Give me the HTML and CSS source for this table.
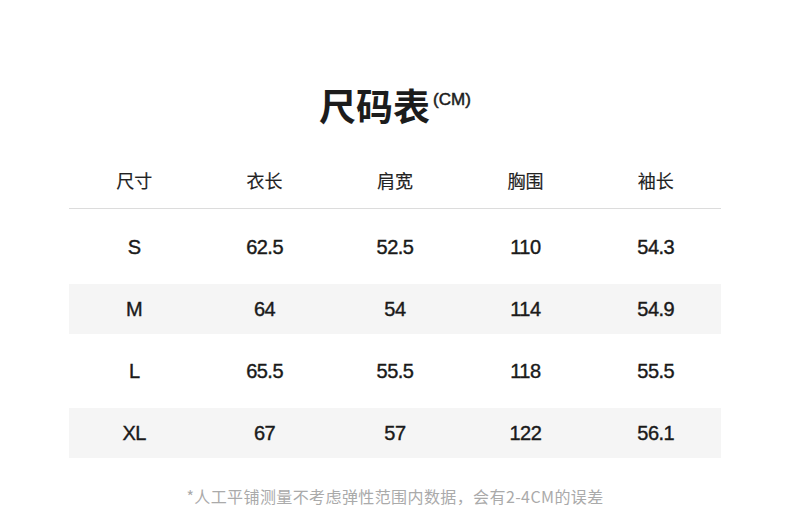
FILE: index.html
```html
<!DOCTYPE html>
<html lang="zh">
<head>
<meta charset="utf-8">
<title>尺码表</title>
<link rel="stylesheet" href="styles.css">
</head>
<body>
<main class="sheet">
  <h1 class="title">尺码表<span class="unit">(CM)</span></h1>
  <div class="table">
    <div class="row head">
      <div class="cell">尺寸</div><div class="cell">衣长</div><div class="cell">肩宽</div><div class="cell">胸围</div><div class="cell">袖长</div>
    </div>
    <div class="row">
      <div class="cell">S</div><div class="cell">62.5</div><div class="cell">52.5</div><div class="cell">110</div><div class="cell">54.3</div>
    </div>
    <div class="row alt">
      <div class="cell">M</div><div class="cell">64</div><div class="cell">54</div><div class="cell">114</div><div class="cell">54.9</div>
    </div>
    <div class="row">
      <div class="cell">L</div><div class="cell">65.5</div><div class="cell">55.5</div><div class="cell">118</div><div class="cell">55.5</div>
    </div>
    <div class="row alt">
      <div class="cell">XL</div><div class="cell">67</div><div class="cell">57</div><div class="cell">122</div><div class="cell">56.1</div>
    </div>
  </div>
  <p class="note">*人工平铺测量不考虑弹性范围内数据，会有2-4CM的误差</p>
</main>
</body>
</html>
```

FILE: styles.css
```css
html, body {
  margin: 0;
  padding: 0;
  background: #fff;
}
.sheet {
  width: 790px;
  height: 506px;
  display: flex;
  flex-direction: column;
  align-items: center;
  font-family: "Liberation Sans", "Noto Sans CJK SC", sans-serif;
  color: #1a1a1a;
}
.title {
  margin: 80px 0 0;
  height: 50px;
  line-height: 50px;
  font-family: "Noto Sans CJK SC", sans-serif;
  font-size: 37px;
  font-weight: 700;
  color: #1c1c1c;
  display: flex;
  align-items: flex-start;
}
.unit {
  font-family: "Liberation Sans", sans-serif;
  font-size: 17px;
  font-weight: 400;
  -webkit-text-stroke: 0.5px #1c1c1c;
  line-height: 17px;
  margin-top: 11px;
  margin-left: 3px;
}
.table {
  width: 652px;
  margin-top: 22px;
  display: flex;
  flex-direction: column;
  gap: 12px;
}
.row {
  display: grid;
  grid-template-columns: repeat(5, 1fr);
  height: 50px;
  align-items: center;
  text-align: center;
  font-size: 20px;
  letter-spacing: -0.5px;
  -webkit-text-stroke: 0.4px #1a1a1a;
}
.row.head {
  height: 56px;
  border-bottom: 1px solid #dcdcdc;
  font-family: "Noto Sans CJK SC", sans-serif;
  font-size: 18px;
  letter-spacing: 0;
  -webkit-text-stroke: 0.15px #222;
  color: #222;
  margin-bottom: 1px;
}
.row.alt {
  background: #f5f5f5;
}
.note {
  margin: 30px 0 0;
  font-family: "Noto Sans CJK SC", sans-serif;
  font-size: 16px;
  letter-spacing: 0.4px;
  color: #aaaaaa;
  line-height: 17px;
}
```
